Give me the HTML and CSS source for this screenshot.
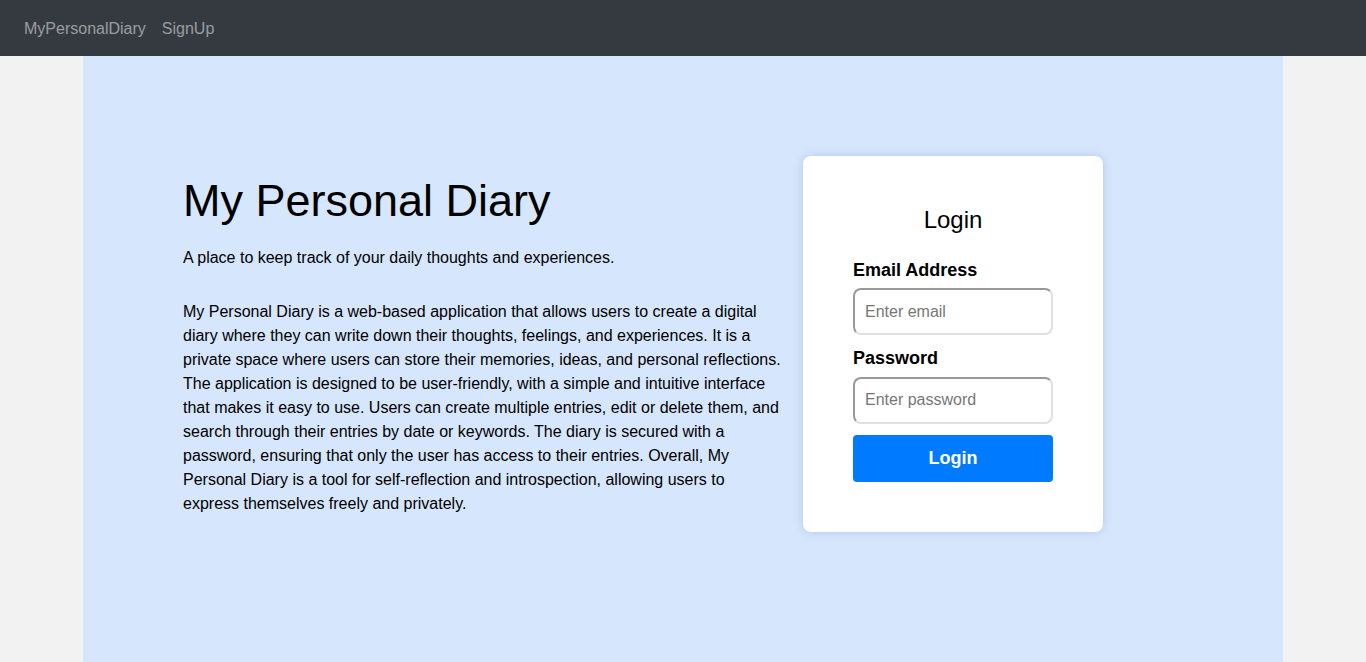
FILE: index.html
```html
<!DOCTYPE html>
<html lang="en">
<head>
<meta charset="utf-8">
<title>MyPersonalDiary</title>
<link rel="stylesheet" href="styles.css">
</head>
<body>
<nav class="navbar">
  <a class="nav-link" href="#">MyPersonalDiary</a>
  <a class="nav-link" href="#">SignUp</a>
</nav>
<main class="page">
  <div class="row">
    <section class="intro">
      <h1 class="title">My Personal Diary</h1>
      <p class="lead">A place to keep track of your daily thoughts and experiences.</p>
      <p class="desc">My Personal Diary is a web-based application that allows users to create a digital diary where they can write down their thoughts, feelings, and experiences. It is a private space where users can store their memories, ideas, and personal reflections. The application is designed to be user-friendly, with a simple and intuitive interface that makes it easy to use. Users can create multiple entries, edit or delete them, and search through their entries by date or keywords. The diary is secured with a password, ensuring that only the user has access to their entries. Overall, My Personal Diary is a tool for self-reflection and introspection, allowing users to express themselves freely and privately.</p>
    </section>
    <form class="card">
      <h2 class="card-title">Login</h2>
      <label class="label" for="email">Email Address</label>
      <input class="input" id="email" type="email" placeholder="Enter email">
      <label class="label label-gap" for="pw">Password</label>
      <input class="input" id="pw" type="password" placeholder="Enter password">
      <button class="btn" type="button">Login</button>
    </form>
  </div>
</main>
</body>
</html>
```
FILE: styles.css
```css
* { box-sizing: border-box; }
html, body { margin: 0; padding: 0; }
body {
  background: #f2f2f2;
  font-family: "Liberation Sans", Arial, sans-serif;
  font-size: 16px;
  color: #000;
}
.navbar {
  height: 56px;
  background: #343a40;
  display: flex;
  align-items: center;
  gap: 16px;
  padding: 2px 24px 0;
}
.nav-link {
  color: rgba(255,255,255,0.5);
  text-decoration: none;
  font-size: 16px;
}
.page {
  width: 1200px;
  margin: 0 auto;
  min-height: calc(100vh - 56px);
  background: #d6e6fc;
  padding: 100px;
}
.row {
  display: flex;
  align-items: center;
  gap: 20px;
}
.intro { width: 600px; padding-top: 2px; }
.title {
  font-size: 45px;
  font-weight: normal;
  line-height: 1.2;
  margin: 0 0 18px;
}
.lead {
  margin: 0 0 30px;
  line-height: 24px;
}
.desc {
  margin: 0;
  line-height: 24px;
}
.card {
  width: 300px;
  background: #fff;
  border-radius: 8px;
  box-shadow: 0 0 10px rgba(80,120,180,0.25);
  padding: 50px 50px 50px;
  display: flex;
  flex-direction: column;
}
.card-title {
  margin: 0 0 25px;
  font-size: 24px;
  font-weight: normal;
  line-height: 1.2;
  text-align: center;
}
.label {
  font-weight: bold;
  font-size: 18px;
  line-height: 1.2;
  margin-bottom: 7px;
}
.label-gap { margin-top: 13px; }
.input {
  width: 200px;
  height: 47px;
  border: 2px solid #e0e0e0;
  border-top-color: #999;
  border-left-color: #999;
  border-radius: 8px;
  padding: 0 10px;
  font-family: inherit;
  font-size: 16px;
  color: #000;
  background: #fff;
}
.input::placeholder { color: #777; }
.btn {
  margin-top: 11px;
  width: 200px;
  height: 47px;
  background: #007bff;
  color: #fff;
  border: none;
  border-radius: 4px;
  font-family: inherit;
  font-weight: bold;
  font-size: 18px;
}
```
